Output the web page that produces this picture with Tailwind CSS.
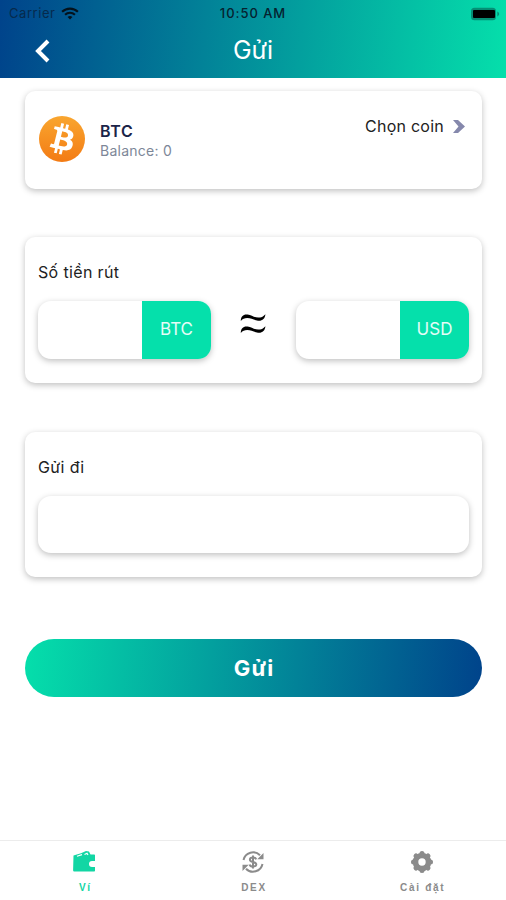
<!DOCTYPE html>
<html lang="vi">
<head>
    <meta charset="UTF-8">
    <meta name="viewport" content="width=device-width, initial-scale=1.0">
    <title>Gửi</title>
    <script src="https://cdn.jsdelivr.net/npm/@tailwindcss/browser@4"></script>
</head>
<body class="flex h-screen flex-col overflow-hidden bg-white font-[Inter,'Liberation_Sans',sans-serif] text-[#222]">
    <header class="h-[78px] shrink-0 bg-linear-[95deg,#00438b,#05dfab]">
        <!-- status bar -->
        <div class="grid h-[26px] grid-cols-3 items-center pt-px pl-[9px] pr-[6px] text-[13px] text-[#06222f]">
            <div class="flex items-center gap-[6px]">
                <span class="tracking-[0.55px] text-[#062a4c]">Carrier</span>
                <svg class="h-[13px] w-[18px]" viewBox="0 0 19 14" fill="none" stroke="#04121c" stroke-width="2.3">
                    <path d="M1 5.2C5.8.6 13.2.6 18 5.2"/>
                    <path d="M4.2 8.4c3-2.9 7.6-2.9 10.6 0"/>
                    <path d="M9.5 13.4L6.9 10.8c1.5-1.4 3.7-1.4 5.2 0z" fill="#04121c" stroke="none"/>
                </svg>
            </div>
            <div class="-ml-[3px] text-center font-medium whitespace-nowrap tracking-[0.95px]">10:50 AM</div>
            <svg class="h-[14px] w-[30px] justify-self-end" viewBox="0 0 30 14">
                <rect x="1" y=".7" width="25" height="12.6" rx="3.5" fill="#058f75"/>
                <rect x="3" y="2.9" width="22" height="8.2" rx="1" fill="#000"/>
                <path d="M27.3 4.6c2.4.8 2.4 4 0 4.8z" fill="#058f75"/>
            </svg>
        </div>
        <div class="grid h-[50px] grid-cols-3 items-center text-white">
            <svg class="ml-[34px] h-[24px] w-[17px]" viewBox="0 0 17 24" fill="none" stroke="currentColor" stroke-width="4">
                <path d="M14 2L4 12l10 10"/>
            </svg>
            <h1 class="text-center text-[25px]">Gửi</h1>
        </div>
    </header>

    <main class="flex grow flex-col pt-[13px] pr-[24px] pl-[25px]">
        <!-- coin picker -->
        <section class="flex h-[98px] justify-between rounded-[10px] pr-[17px] pl-[14px] shadow-[0_2px_6px_rgba(0,0,0,0.25)]">
            <div class="flex items-center gap-[15px] pb-[3px]">
                <svg class="size-[46px]" viewBox="0 0 32 32">
                    <defs>
                        <linearGradient id="coin" x1="0" y1="0" x2="0" y2="1">
                            <stop offset="0" stop-color="#f9a62f"/>
                            <stop offset="1" stop-color="#f37b14"/>
                        </linearGradient>
                    </defs>
                    <circle cx="16" cy="16" r="16" fill="url(#coin)"/>
                    <path fill="#fff" transform="translate(-1.6 -1.7) scale(1.1)" d="M23.189 14.02c.314-2.096-1.283-3.223-3.465-3.975l.708-2.84-1.728-.43-.69 2.765c-.454-.114-.92-.22-1.385-.326l.695-2.783L15.596 6l-.708 2.839c-.376-.086-.746-.17-1.104-.26l.002-.009-2.384-.595-.46 1.846s1.283.294 1.256.312c.7.175.826.638.805 1.006l-.806 3.235c.048.012.11.03.18.057l-.183-.045-1.13 4.532c-.086.212-.303.531-.793.41.018.025-1.256-.313-1.256-.313l-.858 1.978 2.25.561c.418.105.828.215 1.231.318l-.715 2.872 1.727.43.708-2.84c.472.127.93.245 1.378.357l-.706 2.828 1.728.43.715-2.866c2.948.558 5.164.333 6.097-2.333.752-2.146-.037-3.385-1.588-4.192 1.13-.26 1.98-1.003 2.207-2.538zm-3.95 5.538c-.533 2.147-4.148.986-5.32.695l.95-3.805c1.172.293 4.929.872 4.37 3.11zm.535-5.569c-.487 1.953-3.495.96-4.47.717l.86-3.45c.975.243 4.118.696 3.61 2.733z"/>
                </svg>
                <div class="pt-[4px]">
                    <div class="text-[16px] leading-[19px] font-semibold tracking-[0.6px] text-[#1b2448]">BTC</div>
                    <div class="text-[14px] leading-[19px] tracking-[0.25px] text-[#7d8798]">Balance: 0</div>
                </div>
            </div>
            <div class="mt-[24px] flex h-[22px] items-center gap-[9px]">
                <span class="text-[16px] tracking-[0.25px]">Chọn coin</span>
                <svg class="h-[13px] w-[12px]" viewBox="0 0 12 13" fill="#8588ac">
                    <path d="M0 0h5l7 6.5L5 13H0l5.5-6.5z"/>
                </svg>
            </div>
        </section>

        <!-- amount -->
        <section class="mt-[48px] h-[146px] rounded-[10px] px-[13px] pt-[24px] shadow-[0_2px_6px_rgba(0,0,0,0.25)]">
            <h2 class="text-[16px] leading-[22px] tracking-[0.35px]">Số tiền rút</h2>
            <div class="mt-[18px] flex h-[58px] items-stretch justify-between">
                <div class="flex w-[173px] overflow-hidden rounded-[13px] shadow-[0_2px_6px_rgba(0,0,0,0.25)]">
                    <div class="grow"></div>
                    <div class="flex w-[69px] items-center justify-center bg-[#05e0ab] text-[17px] text-white/90">BTC</div>
                </div>
                <svg class="mt-[12px] mr-[2px] h-[21px] w-[26px]" viewBox="0 0 26 21" fill="#000">
                    <path id="wave" d="M.8 8C.8 3.300 3.500 1 7.600 1.600c3.800.6 6.700 3 10.600 3C21 4.600 23.300 3.700 25.400 1.200 25 5.700 22.200 8.200 18 7.700 14 7.200 11 5 7.200 5 4.500 5 2.600 5.700.8 8z"/>
                    <use href="#wave" y="12"/>
                </svg>
                <div class="flex w-[173px] overflow-hidden rounded-[13px] shadow-[0_2px_6px_rgba(0,0,0,0.25)]">
                    <div class="grow"></div>
                    <div class="flex w-[69px] items-center justify-center bg-[#05e0ab] text-[17px] text-white/90">USD</div>
                </div>
            </div>
        </section>

        <!-- recipient -->
        <section class="mt-[49px] h-[145px] rounded-[10px] px-[13px] pt-[24px] shadow-[0_2px_6px_rgba(0,0,0,0.25)]">
            <h2 class="text-[16px] leading-[22px] tracking-[0.35px]">Gửi đi</h2>
            <div class="mt-[18px] h-[57px] rounded-[13px] shadow-[0_2px_6px_rgba(0,0,0,0.25)]"></div>
        </section>

        <button class="mt-[62px] h-[58px] rounded-full bg-linear-[95deg,#05dfab,#00438b] pl-px text-[22px] font-bold tracking-[1.2px] text-white">Gửi</button>
    </main>

    <nav class="grid h-[60px] shrink-0 grid-cols-3 border-t border-[#ececec] font-['Liberation_Sans',sans-serif] text-[10px] font-bold tracking-[1.7px] text-[#8b8b8b]">
        <div class="flex flex-col items-center pt-[9px] text-[#12d6a4]">
            <svg class="size-[24px]" viewBox="0 0 24 24" fill="currentColor">
                <path d="M1.5 5.5L9 3.300l5-2.200 3 .5 1.500 3H22c.6 0 1 .4 1 1V11h-3a3 3 0 0 0 0 6h3v3.600c0 .6-.4 1-1 1H2.500c-.8 0-1.400-.5-1.400-1.300z"/>
                <path d="M5 6.200l5-1.600M12.500 4.500l2.500-1.300 1 1.800" fill="none" stroke="#fff" stroke-width="1.2"/>
            </svg>
            <span class="mt-[6px] ml-[2px]">Ví</span>
        </div>
        <div class="flex flex-col items-center pt-[9px]">
            <svg class="size-[24px]" viewBox="0 0 24 24" fill="none" stroke="currentColor" stroke-width="2">
                <path d="M2.500 10A9.700 9.700 0 0 1 19 5.300"/>
                <path d="M21.500 14A9.700 9.700 0 0 1 5 18.700"/>
                <path d="M22.500 3v6.200h-6.200zM1.500 21v-6.200h6.200z" fill="currentColor" stroke="none"/>
                <path d="M15.200 9.300C14.700 7.900 13.600 7.500 12 7.500c-1.900 0-3.100.8-3.100 2.200 0 3 6.400 1.500 6.400 4.600 0 1.400-1.300 2.200-3.300 2.200-1.800 0-3-.6-3.400-2.100M12 5.500v13"/>
            </svg>
            <span class="mt-[6px] ml-[2px]">DEX</span>
        </div>
        <div class="flex flex-col items-center pt-[9px]">
            <svg class="size-[24px]" viewBox="0 0 24 24" fill="none" stroke="currentColor">
                <circle cx="12" cy="12" r="6.500" stroke-width="5.600"/>
                <!-- eight rounded teeth -->
                <path stroke-width="5" stroke-linecap="round" d="M12 3.500v1M12 19.500v1M3.500 12h1M19.500 12h1M6 6l.7.700M17.300 17.300l.7.700M18 6l-.7.700M6.700 17.300L6 18"/>
            </svg>
            <span class="mt-[6px] ml-[2px]">Cài đặt</span>
        </div>
    </nav>
</body>
</html>
